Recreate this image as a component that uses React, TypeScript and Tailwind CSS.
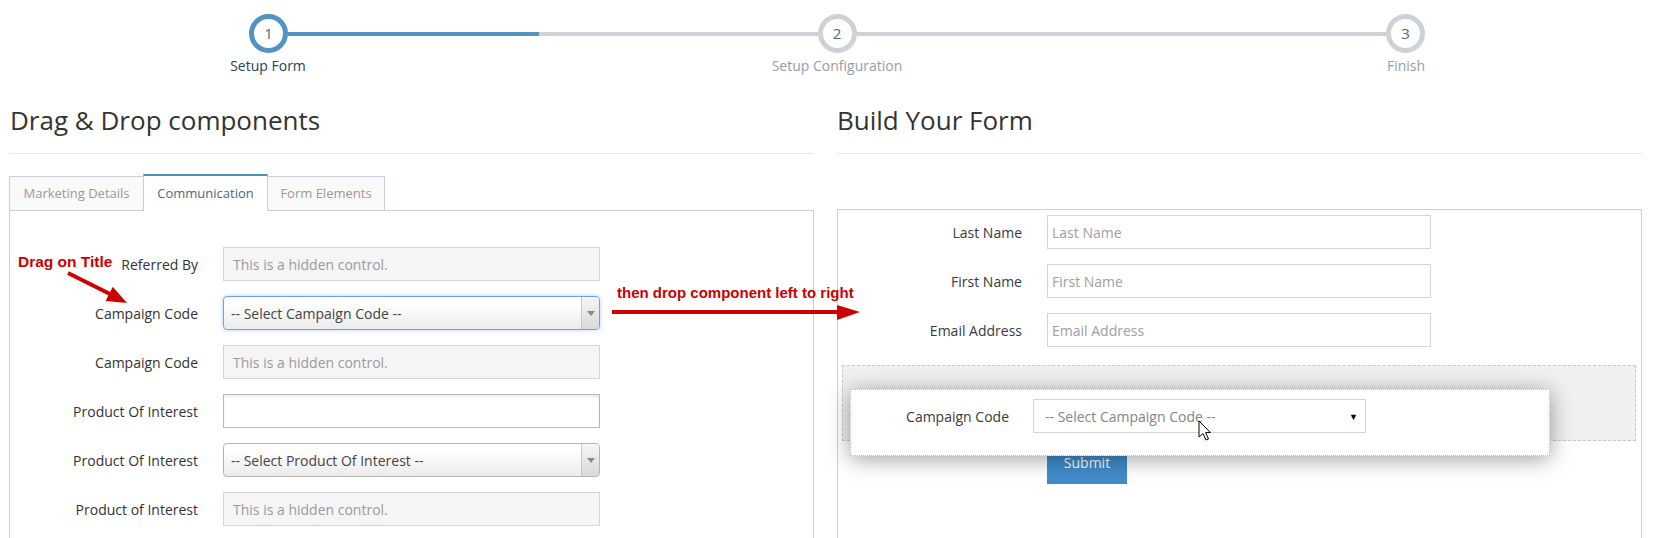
import React from 'react'

const leftRows = [
  { label: 'Referred By', kind: 'hidden' },
  { label: 'Campaign Code', kind: 'select-focused', text: '-- Select Campaign Code --' },
  { label: 'Campaign Code', kind: 'hidden' },
  { label: 'Product Of Interest', kind: 'input' },
  { label: 'Product Of Interest', kind: 'select', text: '-- Select Product Of Interest --' },
  { label: 'Product of Interest', kind: 'hidden' },
]

const rightRows = ['Last Name', 'First Name', 'Email Address']

function StepCircle({ n, active }: { n: number; active?: boolean }) {
  return (
    <div
      className={
        'w-[39px] h-[39px] shrink-0 rounded-full border-[5px] bg-white flex items-center justify-center text-[15px] text-[#546474] ' +
        (active ? 'border-[#5293c4]' : 'border-[#ced1d6]')
      }
    >
      {n}
    </div>
  )
}

function ChosenSelect({ text, focused }: { text: string; focused?: boolean }) {
  return (
    <div
      className={
        'w-[377px] h-[34px] rounded-[4px] border flex items-stretch bg-linear-to-b from-white from-20% via-[#f7f7f7] to-[#ebebeb] ' +
        (focused ? 'border-[#6fa1ea] shadow-[0_0_4px_rgba(88,151,251,0.45)]' : 'border-[#b5b5b5]')
      }
    >
      <span className="flex-1 pl-[7px] flex items-center text-[14px] text-[#444]">{text}</span>
      <div className="w-[18px] border-l border-[#c8c8c8] rounded-r-[4px] bg-linear-to-b from-[#f6f6f6] to-[#d9d9d9] flex items-center justify-center">
        <div className="w-0 h-0 border-x-[4px] border-x-transparent border-t-[5px] border-t-[#8a8a8a]" />
      </div>
    </div>
  )
}

function LeftField({ row }: { row: (typeof leftRows)[number] }) {
  if (row.kind === 'hidden') {
    return (
      <input
        readOnly
        placeholder="This is a hidden control."
        className="w-[377px] h-[34px] border border-[#d5d5d5] bg-[#f5f5f5] px-[9px] text-[14px] outline-none placeholder:text-[#9a9a9a]"
      />
    )
  }
  if (row.kind === 'input') {
    return (
      <input
        readOnly
        className="w-[377px] h-[34px] border border-[#b9b9b9] bg-white px-[9px] text-[14px] outline-none shadow-[inset_0_2px_3px_rgba(0,0,0,0.08)]"
      />
    )
  }
  return <ChosenSelect text={row.text || ''} focused={row.kind === 'select-focused'} />
}

export default function App() {
  return (
    <div className="relative w-[1668px] h-[538px] overflow-hidden bg-white font-['Open_Sans',sans-serif] text-[#333]">
      {/* wizard steps */}
      <div className="pt-[14px]">
        <div className="ml-[249px] w-[1176px] flex items-center">
          <StepCircle n={1} active />
          <div className="flex-1 h-[4px] bg-[#ced1d6]">
            <div className="h-full w-[251px] bg-[#5293c4]" />
          </div>
          <StepCircle n={2} />
          <div className="flex-1 h-[4px] bg-[#ced1d6]" />
          <StepCircle n={3} />
        </div>
        <div className="ml-[168px] w-[1338px] mt-[3px] flex justify-between text-[14px] leading-[20px]">
          <span className="w-[200px] text-center text-[#2b3d53]">Setup Form</span>
          <span className="w-[200px] text-center text-[#949ea7]">Setup Configuration</span>
          <span className="w-[200px] text-center text-[#949ea7]">Finish</span>
        </div>
      </div>

      <div className="flex pl-[9px] gap-[23px] mt-[26px]">
        {/* left column */}
        <div className="w-[805px]">
          <div className="pl-[1px] pb-[15px] border-b border-[#e8e8e8]">
            <h3 className="text-[26px] leading-[36px] font-normal text-[#333]">Drag &amp; Drop components</h3>
          </div>

          <div className="mt-[20px] flex items-end h-[36px] text-[13px]">
            <div className="w-[135px] h-[34px] border-t border-x border-[#c5d0dc] bg-[#f9f9f9] text-[#999] flex items-center justify-center">
              Marketing Details
            </div>
            <div className="relative z-10 -ml-px -mb-px w-[125px] h-[37px] border-x border-[#c5d0dc] border-t-2 border-t-[#4c8fbd] bg-white text-[#576373] flex items-center justify-center">
              Communication
            </div>
            <div className="-ml-px w-[118px] h-[34px] border-t border-x border-[#c5d0dc] bg-[#f9f9f9] text-[#999] flex items-center justify-center">
              Form Elements
            </div>
          </div>

          <div className="border border-[#c5d0dc] pt-[36px] pb-[40px]">
            <div className="flex flex-col gap-[15px]">
              {leftRows.map((row, i) => (
                <div key={i} className="flex items-center gap-[25px]">
                  <label className="w-[188px] text-right text-[14px] text-[#333]">{row.label}</label>
                  <LeftField row={row} />
                </div>
              ))}
            </div>
          </div>
        </div>

        {/* right column */}
        <div className="w-[805px]">
          <div className="pb-[15px] border-b border-[#e8e8e8]">
            <h3 className="text-[26px] leading-[36px] font-normal text-[#333]">Build Your Form</h3>
          </div>

          <div className="relative mt-[55px] border border-[#cfcfcf] pt-[5px] pb-[60px]">
            <div className="flex flex-col gap-[15px]">
              {rightRows.map((label) => (
                <div key={label} className="flex items-center gap-[25px]">
                  <label className="w-[184px] text-right text-[14px] text-[#393939]">{label}</label>
                  <input
                    readOnly
                    placeholder={label}
                    className="w-[384px] h-[34px] border border-[#d5d5d5] bg-white px-[4px] text-[14px] outline-none placeholder:text-[#a0a0a0]"
                  />
                </div>
              ))}
            </div>

            {/* drop placeholder */}
            <div className="mt-[18px] ml-[4px] mr-[5px] h-[76px] border border-dashed border-[#c8c8c8] bg-[#f0f0f0]" />

            <div className="mt-[3px] ml-[209px]">
              <button className="w-[80px] h-[40px] pb-[4px] bg-[#428bca] text-white text-[14px]">Submit</button>
            </div>

            {/* dragged helper */}
            <div className="absolute left-[12px] top-[179px] w-[700px] h-[67px] bg-white border border-dotted border-[#bdbdbd] shadow-[0_3px_22px_rgba(0,0,0,0.38)] pt-[9px]">
              <div className="flex items-center gap-[24px]">
                <label className="w-[158px] text-right text-[14px] text-[#393939]">Campaign Code</label>
                <div className="w-[333px] h-[34px] border border-[#d5d5d5] bg-white flex items-center justify-between pl-[11px] pr-[7px]">
                  <span className="text-[14px] text-[#858585]">-- Select Campaign Code --</span>
                  <span className="text-[9px] text-black leading-none">▼</span>
                </div>
              </div>
            </div>
          </div>
        </div>
      </div>

      {/* annotations */}
      <div className="absolute left-[18px] top-[252px] z-20 font-['Liberation_Sans',Arial,sans-serif] font-bold text-[15.5px] leading-[20px] text-[#cc0000]">
        Drag on Title
      </div>
      <div className="absolute left-[617px] top-[283px] z-20 font-['Liberation_Sans',Arial,sans-serif] font-bold text-[15px] leading-[20px] text-[#cc0000]">
        then drop component left to right
      </div>
      <svg className="absolute left-0 top-0 z-20 pointer-events-none" width={1668} height={538}>
        <line x1={68} y1={273} x2={110} y2={294} stroke="#cc0000" strokeWidth={4} />
        <polygon points="127,303 105.6,301 112.8,286.8" fill="#cc0000" />
        <rect x={612} y={310} width={227} height={4} fill="#cc0000" />
        <polygon points="837,305 860,312 837,320" fill="#cc0000" />
        <path
          d="M1199 421 L1199 437 L1203 433.5 L1206 440 L1208.5 439 L1205.6 432.6 L1210.5 432.6 Z"
          fill="white"
          stroke="black"
          strokeWidth={1}
          strokeLinejoin="round"
        />
      </svg>
    </div>
  )
}
